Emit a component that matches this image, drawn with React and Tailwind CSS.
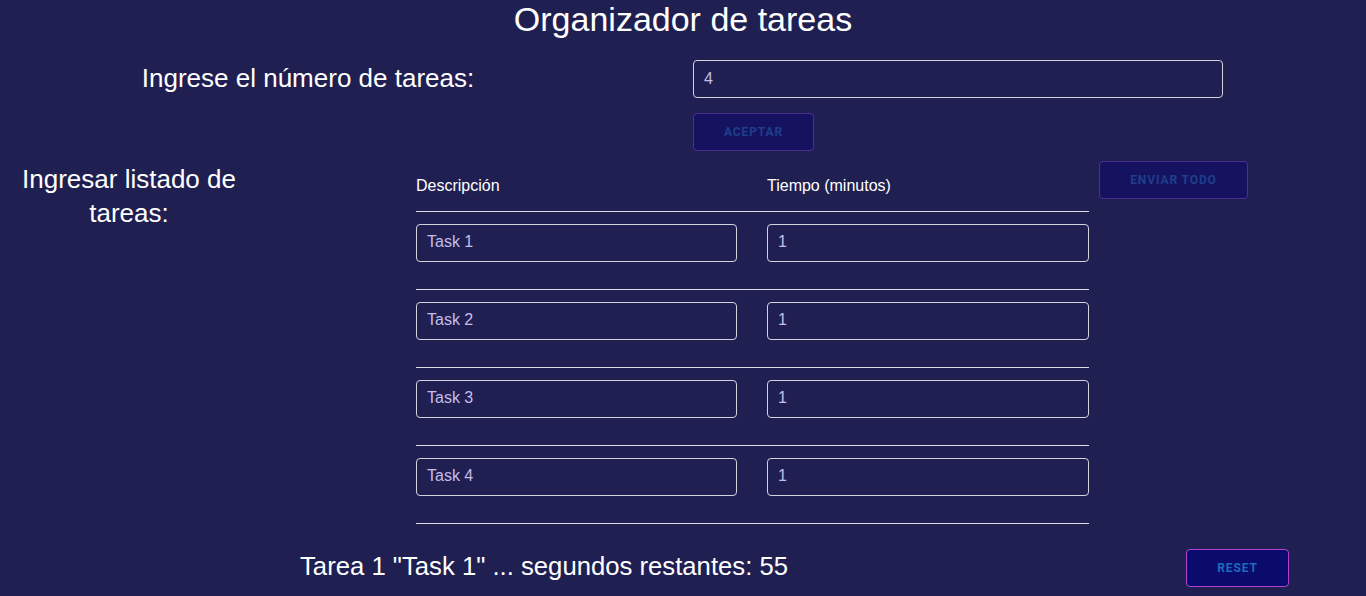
export default function App() {
  const rows = ["Task 1", "Task 2", "Task 3", "Task 4"];
  const font = { fontFamily: '"Liberation Sans", Arial, sans-serif' };
  const btnFont = { fontFamily: 'Roboto, "Liberation Sans", sans-serif' };
  return (
    <div className="w-[1366px] h-[596px] overflow-hidden bg-[#201f52] text-white" style={font}>
      <h1 className="text-center text-[34px] leading-[38px] h-[40px]">Organizador de tareas</h1>
      <div className="flex mt-[20px]">
        <div className="w-[616px] text-center text-[26px] leading-[37px]">Ingrese el número de tareas:</div>
        <div className="ml-[77px] flex flex-col gap-[15px]">
          <input
            readOnly
            value="4"
            className="w-[530px] h-[38px] rounded-[4px] border border-[#d4d2dc] bg-transparent px-[10px] text-[16px] text-[#c4bde8] outline-none"
            style={font}
          />
          <button
            className="w-[121px] h-[38px] rounded-[4px] border border-[#4f2d96] bg-[#15135f] text-[12px] font-bold tracking-[0.9px] text-[#1f3e8c]"
            style={btnFont}
          >
            ACEPTAR
          </button>
        </div>
      </div>
      <div className="flex mt-[11px]">
        <div className="w-[258px] text-center text-[26px] leading-[34px]">Ingresar listado de tareas:</div>
        <div className="ml-[158px] w-[673px] mt-[14px]">
          <div className="flex h-[36px] border-b border-[#dcdce6] text-[16px] leading-[20px]">
            <div className="w-[351px]">Descripción</div>
            <div>Tiempo (minutos)</div>
          </div>
          {rows.map((r) => (
            <div key={r} className="flex h-[78px] pt-[12px] border-b border-[#dcdce6]">
              <input
                readOnly
                value={r}
                className="w-[321px] h-[38px] rounded-[4px] border border-[#d4d2dc] bg-transparent px-[10px] pb-[2px] text-[16px] text-[#c4bde8] outline-none"
                style={font}
              />
              <input
                readOnly
                value="1"
                className="ml-[30px] w-[322px] h-[38px] rounded-[4px] border border-[#d4d2dc] bg-transparent px-[10px] pb-[2px] text-[16px] text-[#c4bde8] outline-none"
                style={font}
              />
            </div>
          ))}
        </div>
        <div className="ml-[10px] -mt-[1px]">
          <button
            className="w-[149px] h-[38px] rounded-[4px] border border-[#4f2d96] bg-[#15135f] text-[12px] font-bold tracking-[0.9px] text-[#1f3e8c]"
            style={btnFont}
          >
            ENVIAR TODO
          </button>
        </div>
      </div>
      <div className="flex items-center mt-[25px]">
        <div className="ml-[300px] w-[886px] text-[25.7px] leading-[34px] pb-[4px]">Tarea 1 "Task 1" ... segundos restantes: 55</div>
        <button
          className="w-[103px] h-[38px] rounded-[4px] border border-[#b33fd4] bg-[#0b0b6c] text-[12px] font-bold tracking-[0.9px] text-[#1c6ac2]"
          style={btnFont}
        >
          RESET
        </button>
      </div>
    </div>
  );
}
